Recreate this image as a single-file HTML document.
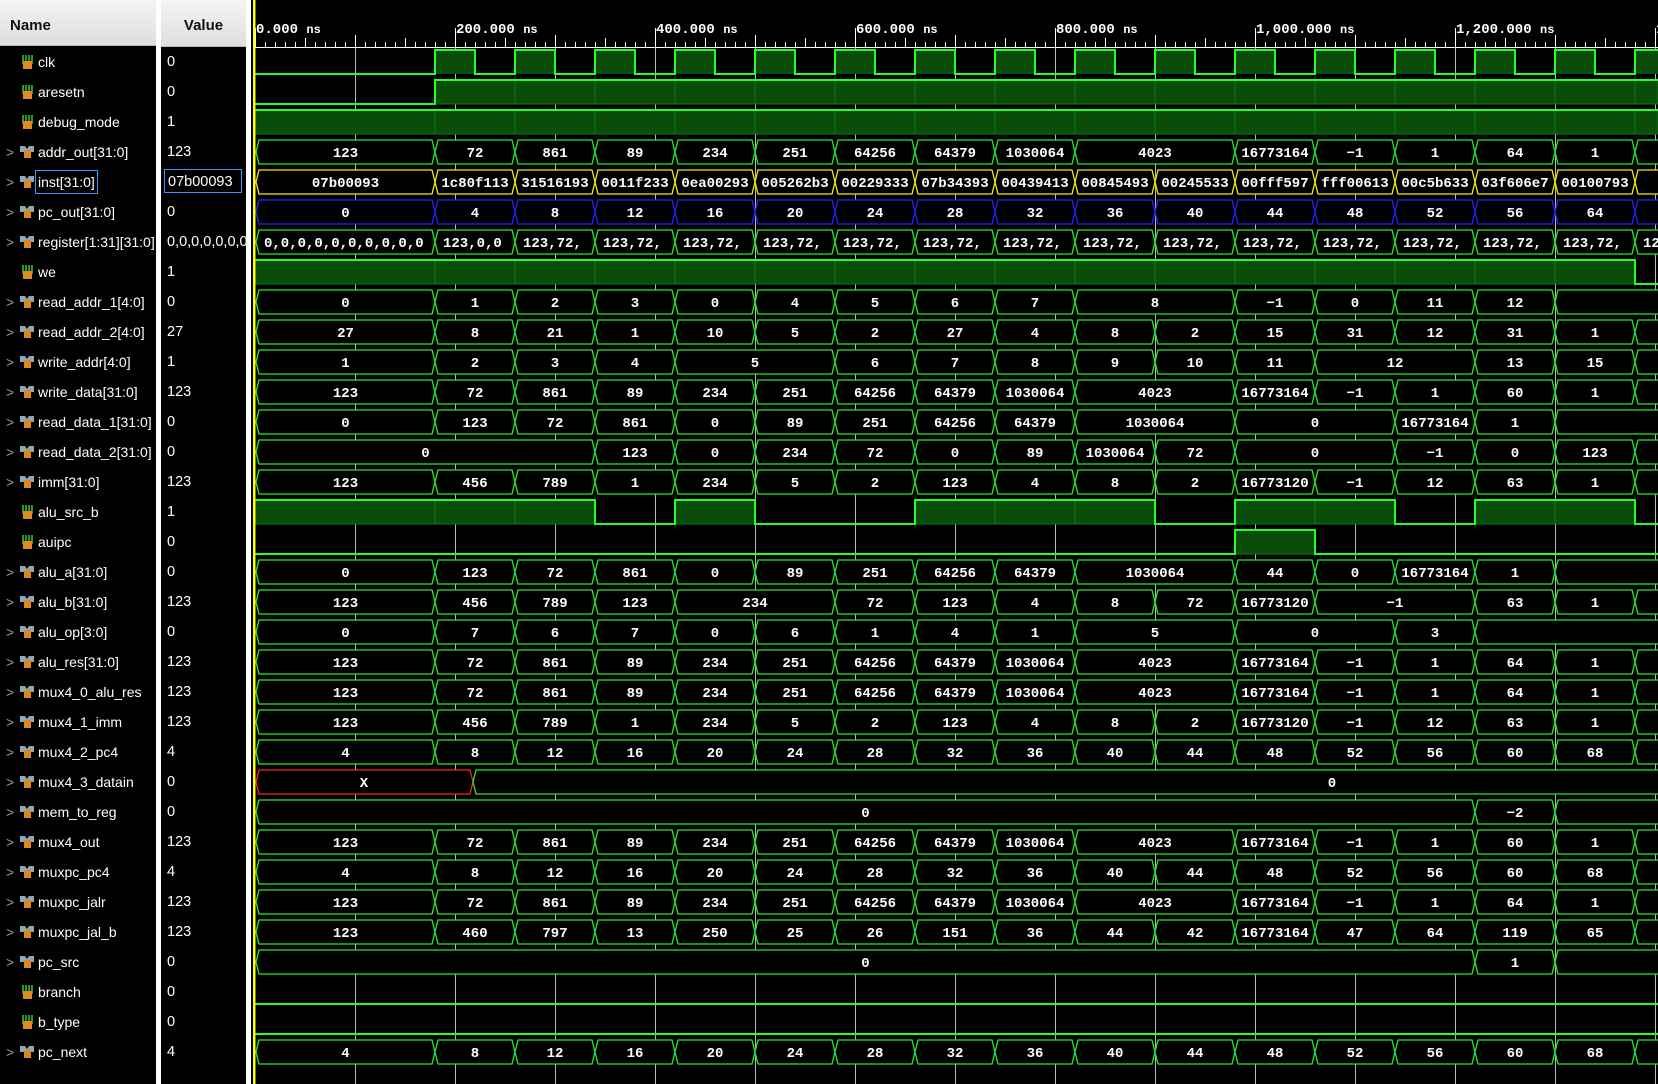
<!DOCTYPE html>
<html><head><meta charset="utf-8"><style>
html,body{margin:0;padding:0;background:#000;width:1658px;height:1084px;overflow:hidden}
#names{position:absolute;left:0;top:0;width:156px;height:1084px;background:#000;overflow:hidden}
#vals{position:absolute;left:161px;top:0;width:85px;height:1084px;background:#000;overflow:hidden}
.sep{position:absolute;top:0;height:1084px;background:#fff}
.hdr{position:absolute;top:0;height:46px;background:linear-gradient(#f4f4f4,#dedede);font:bold 15px "Liberation Sans",sans-serif;color:#111;line-height:52px;border-bottom:1px solid #bbb}
.nm{position:absolute;left:38px;font:14px "Liberation Sans",sans-serif;color:#fff;white-space:nowrap;line-height:18px}
.vl{position:absolute;left:6px;font:14.5px "Liberation Sans",sans-serif;color:#fff;white-space:nowrap;line-height:18px}
.chev{position:absolute;left:6px;color:#999;font:14px "Liberation Sans",sans-serif}
svg text{font-family:"Liberation Mono",monospace;font-weight:bold}
</style></head><body>
<div id="names"><div class="hdr" style="left:0;width:156px;padding-left:10px;box-sizing:border-box">Name</div></div>
<div class="sep" style="left:156px;width:5px"></div>
<div id="vals"><div class="hdr" style="left:0;width:85px;text-align:center">Value</div></div>
<div class="sep" style="left:246px;width:5px"></div>
<svg id="w" style="position:absolute;left:0;top:0" width="1658" height="1084"></svg>
<script>
var names=["clk","aresetn","debug_mode","addr_out[31:0]","inst[31:0]","pc_out[31:0]","register[1:31][31:0]","we","read_addr_1[4:0]","read_addr_2[4:0]","write_addr[4:0]","write_data[31:0]","read_data_1[31:0]","read_data_2[31:0]","imm[31:0]","alu_src_b","auipc","alu_a[31:0]","alu_b[31:0]","alu_op[3:0]","alu_res[31:0]","mux4_0_alu_res","mux4_1_imm","mux4_2_pc4","mux4_3_datain","mem_to_reg","mux4_out","muxpc_pc4","muxpc_jalr","muxpc_jal_b","pc_src","branch","b_type","pc_next"];
var vals=["0","0","1","123","07b00093","0","0,0,0,0,0,0,0","1","0","27","1","123","0","0","123","1","0","0","123","0","123","123","123","4","0","0","123","4","123","123","0","0","0","4"];
var bits={0:1,1:1,2:1,7:1,15:1,16:1,31:1,32:1};
var N=document.getElementById('names'),V=document.getElementById('vals');
for(var i=0;i<34;i++){var c=62+30*i;
 var h='';
 if(!bits[i]) h+='<div class="chev" style="top:'+(c-8)+'px">&gt;</div>';
 var ic=bits[i]?'<svg style="position:absolute;left:22px;top:'+(c-8)+'px" width="12" height="16"><path d="M1 1v9M4 1v9M7 1v9M10 1v9" stroke="#3c3" stroke-width="1.5"/><rect x="1" y="7" width="9" height="8" fill="#e08a20"/></svg>'
 :'<svg style="position:absolute;left:20px;top:'+(c-7)+'px" width="14" height="14"><path d="M0 1h5l2 3 2-3h5v6H0z" fill="#8ab"/><rect x="4" y="5" width="7" height="8" fill="#d88a20"/></svg>';
 h+=ic;
 h+='<div class="nm" style="top:'+(c-9)+'px;'+(i==4?'outline:1px solid #39f;outline-offset:2px':'')+'">'+names[i]+'</div>';
 N.insertAdjacentHTML('beforeend',h);
 V.insertAdjacentHTML('beforeend','<div class="vl" style="'+(i==4?'left:3px;padding-left:3px;width:78px;height:24px;top:'+(c-13)+'px;line-height:24px;border:1px solid #39f;box-sizing:border-box':'top:'+(c-9)+'px')+'">'+vals[i]+'</div>');
}
var E=[435,515,595,675,755,835,915,995,1075,1155,1235,1315,1395,1475,1555,1635];
function segs(L){var r=[];for(var s=0;s<17;s++){var x0=s==0?255:E[s-1],x1=s==16?1720:E[s];if(L[s]=='^'){r[r.length-1][1]=x1}else r.push([x0,x1,L[s]]);}return r;}
var A=["123","72","861","89","234","251","64256","64379","1030064","4023","^","16773164","-1","1","64","1",""];
var IMM=["123","456","789","1","234","5","2","123","4","8","2","16773120","-1","12","63","1",""];
var PC4=["4","8","12","16","20","24","28","32","36","40","44","48","52","56","60","68",""];
var W=A.slice();W[14]="60";
var R=["0,0,0,0,0,0,0,0,0,0","123,0,0"];for(var k=2;k<16;k++)R.push("123,72,");R.push("123,72,");
var bus={
3:A,4:["07b00093","1c80f113","31516193","0011f233","0ea00293","005262b3","00229333","07b34393","00439413","00845493","00245533","00fff597","fff00613","00c5b633","03f606e7","00100793",""],
5:["0","4","8","12","16","20","24","28","32","36","40","44","48","52","56","64",""],
6:R,
8:["0","1","2","3","0","4","5","6","7","8","^","-1","0","11","12","","^"],
9:["27","8","21","1","10","5","2","27","4","8","2","15","31","12","31","1",""],
10:["1","2","3","4","5","^","6","7","8","9","10","11","12","^","13","15",""],
11:W,
12:["0","123","72","861","0","89","251","64256","64379","1030064","^","0","^","16773164","1","","^"],
13:["0","^","^","123","0","234","72","0","89","1030064","72","0","^","-1","0","123",""],
14:IMM,
17:["0","123","72","861","0","89","251","64256","64379","1030064","^","44","0","16773164","1","","^"],
18:["123","456","789","123","234","^","72","123","4","8","72","16773120","-1","^","63","1",""],
19:["0","7","6","7","0","6","1","4","1","5","^","0","^","3","","^","^"],
20:A,21:A,22:IMM,23:PC4,
25:["0","^","^","^","^","^","^","^","^","^","^","^","^","^","-2","","^"],
26:W,27:PC4,28:A,
29:["123","460","797","13","250","25","26","151","36","44","42","16773164","47","64","119","65",""],
30:["0","^","^","^","^","^","^","^","^","^","^","^","^","^","1","","^"],
33:PC4};
var bin={1:[0,1,1,1,1,1,1,1,1,1,1,1,1,1,1,1,1],2:[1,1,1,1,1,1,1,1,1,1,1,1,1,1,1,1,1],7:[1,1,1,1,1,1,1,1,1,1,1,1,1,1,1,1,0],15:[1,1,1,0,1,0,0,1,1,1,0,1,1,0,1,1,0],16:[0,0,0,0,0,0,0,0,0,0,0,1,0,0,0,0,0],31:[0],32:[0]};
var s='';
for(var t=100;t<=1400;t+=100){var x=255+t;s+='<line x1="'+(x+.5)+'" y1="'+(t%200==0?28:35)+'" x2="'+(x+.5)+'" y2="1084" stroke="#b8b8b8" stroke-width="1"/>';}
for(var t=0;t<=1400;t+=10){var x=255+t+.5;var hh=t%50==0?9:5;if(t%100==0)continue;s+='<line x1="'+x+'" y1="'+(47-hh)+'" x2="'+x+'" y2="47" stroke="#fff"/>';}
for(var t=0;t<=1400;t+=100){var x=255+t+.5;s+='<line x1="'+x+'" y1="'+(t%200==0?28:35)+'" x2="'+x+'" y2="47" stroke="#fff"/>';}
s+='<line x1="255" y1="47.5" x2="1658" y2="47.5" stroke="#fff"/>';
var lab=["0.000","200.000","400.000","600.000","800.000","1,000.000","1,200.000","1,400.000"];
for(var k=0;k<8;k++){s+='<text x="'+(256+200*k)+'" y="33" fill="#fff" font-size="14">'+lab[k]+' <tspan font-size="12">ns</tspan></text>';}
function poly(x0,x1,c,col){var x1c=Math.min(x1,1720);return '<polygon points="'+x0+','+c+' '+(x0+3)+','+(c-12)+' '+(x1c-3)+','+(c-12)+' '+x1c+','+c+' '+(x1c-3)+','+(c+12)+' '+(x0+3)+','+(c+12)+'" fill="#000" stroke="'+col+'" stroke-width="1.3"/>';}
for(var i=0;i<34;i++){var c=62+30*i;
 if(i==0){var d='M255 '+(c+12);for(var k=0;k<18;k++){var r=435+80*k;if(r>1658)break;s+='<rect x="'+r+'" y="'+(c-12)+'" width="40" height="24" fill="#0a4d0a"/>';d+='H'+r+'V'+(c-12)+'H'+(r+40)+'V'+(c+12);}d+='H1658';s+='<path d="'+d+'" fill="none" stroke="#2f2" stroke-width="2"/>';continue;}
 if(bin[i]){var b=bin[i];var d='M255 '+(b[0]?c-12:c+12);for(var k=0;k<17;k++){var v=b[k]!==undefined?b[k]:b[b.length-1];var x0=k==0?255:E[k-1],x1=k==16?1658:E[k];if(v)s+='<rect x="'+x0+'" y="'+(c-12)+'" width="'+(x1-x0)+'" height="24" fill="#0a4d0a" stroke="#0b7a0b"/>';d+='H'+x0+'V'+(v?c-12:c+12)+'H'+x1;}s+='<path d="'+d+'" fill="none" stroke="#2f2" stroke-width="2"/>';continue;}
 if(i==24){s+=poly(256,473,c,'#f22')+'<text x="364" y="'+(c+5)+'" fill="#fff" font-size="14" text-anchor="middle">X</text>'+poly(473,1720,c,'#2e2')+'<text x="1332" y="'+(c+5)+'" fill="#fff" font-size="14" text-anchor="middle">0</text>';continue;}
 var col=i==4?'#ee0':(i==5?'#22f':'#2e2');
 var sg=segs(bus[i]);
 for(var j=0;j<sg.length;j++){var x0=sg[j][0]==255?256:sg[j][0],x1=sg[j][1];s+=poly(x0,x1,c,col);
  var L=sg[j][2];if(!L)continue;
  if(i==6){s+='<clipPath id="cp'+j+'"><rect x="'+(x0+3)+'" y="'+(c-12)+'" width="'+(x1-x0-6)+'" height="24"/></clipPath><text clip-path="url(#cp'+j+')" x="'+(x0+8)+'" y="'+(c+5)+'" fill="#fff" font-size="14">'+L+'</text>';}
  else{var cx=(x0+Math.min(x1,1658))/2;if(x1>1700&&x0<1400)cx=(x0+x1)/2;s+='<text x="'+cx+'" y="'+(c+5)+'" fill="#fff" font-size="14" text-anchor="middle">'+L.replace('-','\u2212')+'</text>';}
 }
}
s+='<rect x="253" y="0" width="2.5" height="1084" fill="#ff0"/>';
document.getElementById('w').innerHTML=s;
</script>
</body></html>
